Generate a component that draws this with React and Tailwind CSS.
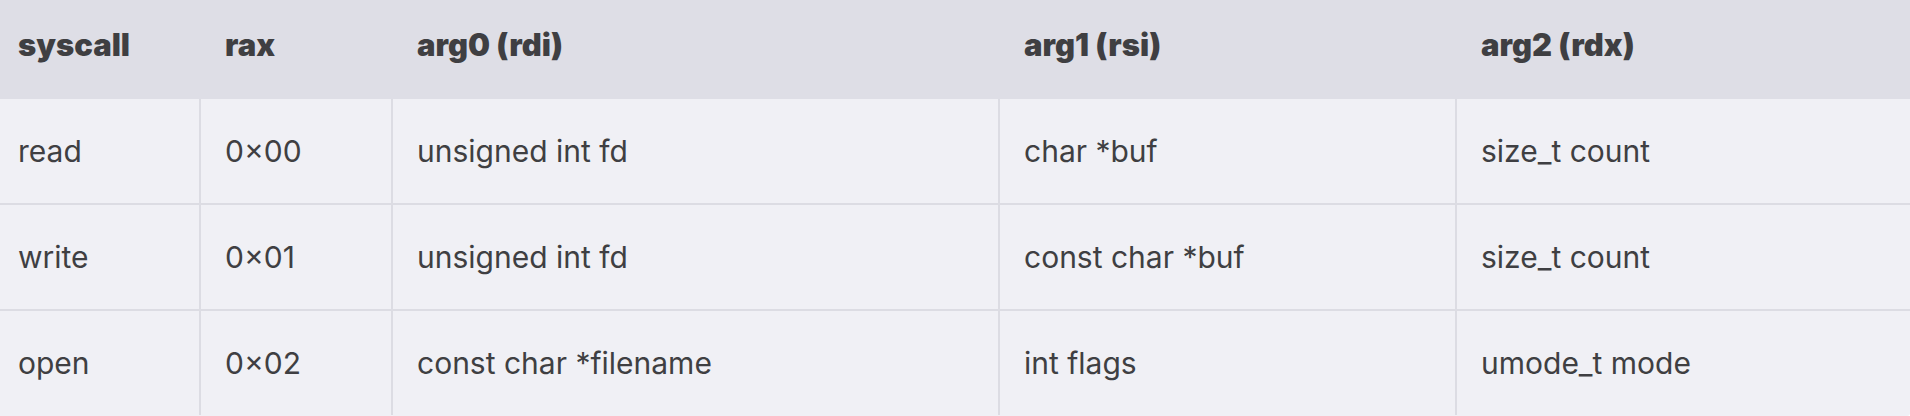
import React from 'react';

const columns = ['syscall', 'rax', 'arg0 (rdi)', 'arg1 (rsi)', 'arg2 (rdx)'];

const rows = [
  ['read', '0×00', 'unsigned int fd', 'char *buf', 'size_t count'],
  ['write', '0×01', 'unsigned int fd', 'const char *buf', 'size_t count'],
  ['open', '0×02', 'const char *filename', 'int flags', 'umode_t mode'],
];

const grid = 'grid grid-cols-[199px_192px_607px_457px_1fr]';

export default function App() {
  return (
    <div className="w-[1910px] h-[416px] overflow-hidden bg-[#f0f0f5] text-[#3f3f42] font-['Inter',sans-serif] text-[30px] rounded-br-[3px]">
      {/* Header */}
      <div className={`${grid} h-[99px] bg-[#dedee6] font-black text-[31px]`}>
        {columns.map((col, idx) => (
          <div key={col} className={`flex items-center pb-[9px] ${idx === 0 ? 'pl-[18px]' : 'pl-[26px]'}`}>
            {col}
          </div>
        ))}
      </div>

      {/* Body */}
      {rows.map((row, ridx) => (
        <div key={ridx} className={`${grid} ${ridx > 0 ? 'border-t-2 border-[#dcdce3] h-[106px]' : 'h-[104px]'}`}>
          {row.map((cell, cidx) => (
            <div
              key={cidx}
              className={`flex items-center ${cidx === 0 ? 'pl-[18px]' : 'pl-6 border-l-2 border-[#dcdce3]'}`}
            >
              {cell}
            </div>
          ))}
        </div>
      ))}
    </div>
  );
}
